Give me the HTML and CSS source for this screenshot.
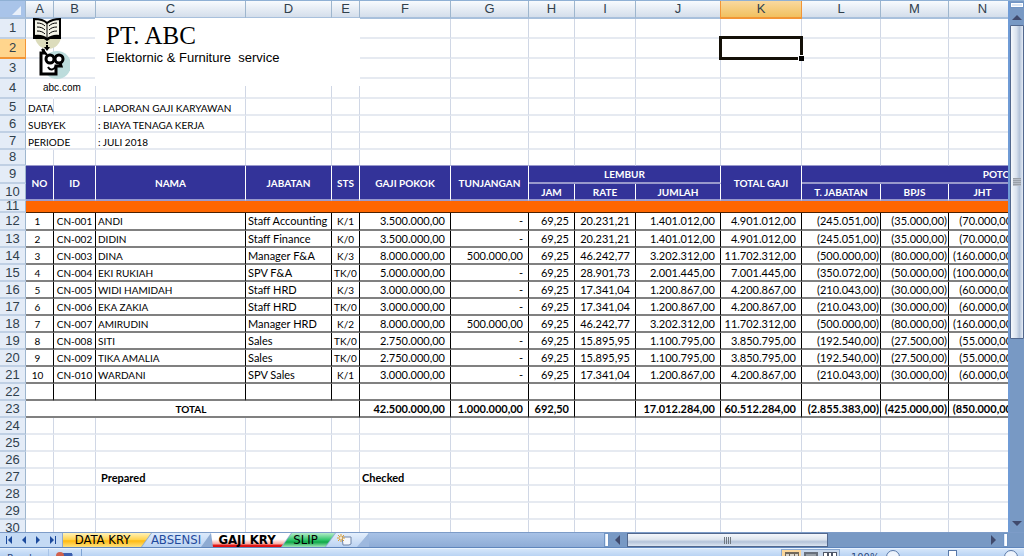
FILE: index.html
```html
<!DOCTYPE html>
<html lang="id">
<head>
<meta charset="utf-8">
<title>Laporan Gaji Karyawan</title>
<link rel="stylesheet" href="styles.css">
</head>
<body>
<main class="workspace">
  <div class="pane">
    <table class="sheet">
      <colgroup>
        <col class="c-head"><col class="c-a"><col class="c-b"><col class="c-c"><col class="c-d"><col class="c-e"><col class="c-f"><col class="c-g"><col class="c-h"><col class="c-i"><col class="c-j"><col class="c-k"><col class="c-l"><col class="c-m"><col class="c-n"><col class="c-o">
      </colgroup>
      <thead>
        <tr class="letters"><th class="corner"><svg width="25" height="16" viewBox="0 0 25 16"><path d="M21 5v9h-9z" fill="#e9f0fa"/></svg></th><th>A</th><th>B</th><th>C</th><th>D</th><th>E</th><th>F</th><th>G</th><th>H</th><th>I</th><th>J</th><th class="picked">K</th><th>L</th><th>M</th><th>N</th><th></th></tr>
      </thead>
      <tbody>
        <tr class="h20"><th>1</th><td class="open"></td><td></td><td></td><td></td><td></td><td></td><td></td><td></td><td></td><td></td><td></td><td></td><td></td><td></td><td></td></tr>
        <tr class="h20"><th class="picked">2</th><td></td><td></td><td></td><td></td><td></td><td></td><td></td><td></td><td></td><td></td><td class="active-cell"><div class="cursor"><i class="handle"></i></div></td><td></td><td></td><td></td><td></td></tr>
        <tr class="h20"><th>3</th><td class="open"></td><td></td><td></td><td></td><td></td><td></td><td></td><td></td><td></td><td></td><td></td><td></td><td></td><td></td><td></td></tr>
        <tr class="h20"><th>4</th><td class="open"></td><td></td><td></td><td></td><td></td><td></td><td></td><td></td><td></td><td></td><td></td><td></td><td></td><td></td><td></td></tr>
        <tr class="h17 info"><th>5</th><td>DATA</td><td></td><td>: LAPORAN GAJI KARYAWAN</td><td></td><td></td><td></td><td></td><td></td><td></td><td></td><td></td><td></td><td></td><td></td><td></td></tr>
        <tr class="h17 info"><th>6</th><td colspan="2">SUBYEK</td><td>: BIAYA TENAGA KERJA</td><td></td><td></td><td></td><td></td><td></td><td></td><td></td><td></td><td></td><td></td><td></td><td></td></tr>
        <tr class="h17 info"><th>7</th><td colspan="2">PERIODE</td><td>: JULI 2018</td><td></td><td></td><td></td><td></td><td></td><td></td><td></td><td></td><td></td><td></td><td></td><td></td></tr>
        <tr class="h16 before-head"><th>8</th><td></td><td></td><td></td><td></td><td></td><td></td><td></td><td></td><td></td><td></td><td></td><td></td><td></td><td></td><td></td></tr>
        <tr class="h18 titles"><th>9</th><td rowspan="2">NO</td><td rowspan="2">ID</td><td rowspan="2">NAMA</td><td rowspan="2">JABATAN</td><td rowspan="2">STS</td><td rowspan="2">GAJI POKOK</td><td rowspan="2">TUNJANGAN</td><td colspan="3">LEMBUR</td><td rowspan="2">TOTAL GAJI</td><td colspan="4">POTONGAN</td></tr>
        <tr class="h17 titles"><th>10</th><td>JAM</td><td>RATE</td><td>JUMLAH</td><td>T. JABATAN</td><td>BPJS</td><td>JHT</td><td></td></tr>
        <tr class="h12 band"><th>11</th><td colspan="15"></td></tr>
        <tr class="h18 rec"><th>12</th><td>1</td><td>CN-001</td><td>ANDI</td><td>Staff Accounting</td><td>K/1</td><td>3.500.000,00</td><td>-</td><td>69,25</td><td>20.231,21</td><td>1.401.012,00</td><td>4.901.012,00</td><td>(245.051,00)</td><td>(35.000,00)</td><td>(70.000,00)</td><td></td></tr>
        <tr class="h17 rec"><th>13</th><td>2</td><td>CN-002</td><td>DIDIN</td><td>Staff Finance</td><td>K/0</td><td>3.500.000,00</td><td>-</td><td>69,25</td><td>20.231,21</td><td>1.401.012,00</td><td>4.901.012,00</td><td>(245.051,00)</td><td>(35.000,00)</td><td>(70.000,00)</td><td></td></tr>
        <tr class="h17 rec"><th>14</th><td>3</td><td>CN-003</td><td>DINA</td><td>Manager F&amp;A</td><td>K/3</td><td>8.000.000,00</td><td>500.000,00</td><td>69,25</td><td>46.242,77</td><td>3.202.312,00</td><td>11.702.312,00</td><td>(500.000,00)</td><td>(80.000,00)</td><td>(160.000,00)</td><td></td></tr>
        <tr class="h17 rec"><th>15</th><td>4</td><td>CN-004</td><td>EKI RUKIAH</td><td>SPV F&amp;A</td><td>TK/0</td><td>5.000.000,00</td><td>-</td><td>69,25</td><td>28.901,73</td><td>2.001.445,00</td><td>7.001.445,00</td><td>(350.072,00)</td><td>(50.000,00)</td><td>(100.000,00)</td><td></td></tr>
        <tr class="h17 rec"><th>16</th><td>5</td><td>CN-005</td><td>WIDI HAMIDAH</td><td>Staff HRD</td><td>K/3</td><td>3.000.000,00</td><td>-</td><td>69,25</td><td>17.341,04</td><td>1.200.867,00</td><td>4.200.867,00</td><td>(210.043,00)</td><td>(30.000,00)</td><td>(60.000,00)</td><td></td></tr>
        <tr class="h17 rec"><th>17</th><td>6</td><td>CN-006</td><td>EKA ZAKIA</td><td>Staff HRD</td><td>TK/0</td><td>3.000.000,00</td><td>-</td><td>69,25</td><td>17.341,04</td><td>1.200.867,00</td><td>4.200.867,00</td><td>(210.043,00)</td><td>(30.000,00)</td><td>(60.000,00)</td><td></td></tr>
        <tr class="h17 rec"><th>18</th><td>7</td><td>CN-007</td><td>AMIRUDIN</td><td>Manager HRD</td><td>K/2</td><td>8.000.000,00</td><td>500.000,00</td><td>69,25</td><td>46.242,77</td><td>3.202.312,00</td><td>11.702.312,00</td><td>(500.000,00)</td><td>(80.000,00)</td><td>(160.000,00)</td><td></td></tr>
        <tr class="h17 rec"><th>19</th><td>8</td><td>CN-008</td><td>SITI</td><td>Sales</td><td>TK/0</td><td>2.750.000,00</td><td>-</td><td>69,25</td><td>15.895,95</td><td>1.100.795,00</td><td>3.850.795,00</td><td>(192.540,00)</td><td>(27.500,00)</td><td>(55.000,00)</td><td></td></tr>
        <tr class="h17 rec"><th>20</th><td>9</td><td>CN-009</td><td>TIKA AMALIA</td><td>Sales</td><td>TK/0</td><td>2.750.000,00</td><td>-</td><td>69,25</td><td>15.895,95</td><td>1.100.795,00</td><td>3.850.795,00</td><td>(192.540,00)</td><td>(27.500,00)</td><td>(55.000,00)</td><td></td></tr>
        <tr class="h17 rec"><th>21</th><td>10</td><td>CN-010</td><td>WARDANI</td><td>SPV Sales</td><td>K/1</td><td>3.000.000,00</td><td>-</td><td>69,25</td><td>17.341,04</td><td>1.200.867,00</td><td>4.200.867,00</td><td>(210.043,00)</td><td>(30.000,00)</td><td>(60.000,00)</td><td></td></tr>
        <tr class="h17 rec"><th>22</th><td></td><td></td><td></td><td></td><td></td><td></td><td></td><td></td><td></td><td></td><td></td><td></td><td></td><td></td><td></td></tr>
        <tr class="h17 total"><th>23</th><td colspan="5" class="mid">TOTAL</td><td>42.500.000,00</td><td>1.000.000,00</td><td>692,50</td><td></td><td>17.012.284,00</td><td>60.512.284,00</td><td class="neg">(2.855.383,00)</td><td class="neg">(425.000,00)</td><td class="neg">(850.000,00)</td><td></td></tr>
        <tr class="h17"><th>24</th><td></td><td></td><td></td><td></td><td></td><td></td><td></td><td></td><td></td><td></td><td></td><td></td><td></td><td></td><td></td></tr>
        <tr class="h17"><th>25</th><td></td><td></td><td></td><td></td><td></td><td></td><td></td><td></td><td></td><td></td><td></td><td></td><td></td><td></td><td></td></tr>
        <tr class="h17"><th>26</th><td></td><td></td><td></td><td></td><td></td><td></td><td></td><td></td><td></td><td></td><td></td><td></td><td></td><td></td><td></td></tr>
        <tr class="h17 sign"><th>27</th><td></td><td></td><td class="indent">Prepared</td><td></td><td></td><td>Checked</td><td></td><td></td><td></td><td></td><td></td><td></td><td></td><td></td><td></td></tr>
        <tr class="h17"><th>28</th><td></td><td></td><td></td><td></td><td></td><td></td><td></td><td></td><td></td><td></td><td></td><td></td><td></td><td></td><td></td></tr>
        <tr class="h17"><th>29</th><td></td><td></td><td></td><td></td><td></td><td></td><td></td><td></td><td></td><td></td><td></td><td></td><td></td><td></td><td></td></tr>
        <tr class="h17"><th>30</th><td></td><td></td><td></td><td></td><td></td><td></td><td></td><td></td><td></td><td></td><td></td><td></td><td></td><td></td><td></td></tr>
      </tbody>
    </table>
    <div class="letterhead">
      <div class="brand">
        <svg width="40" height="62" viewBox="0 0 40 62">
          <circle cx="18" cy="18" r="13" fill="#dcdcbc"/>
          <circle cx="27" cy="47" r="14" fill="#bcdcdc"/>
          <path d="M4 1v17c6-1 10 0 13 3 4-3 8-4 13-3V1c-5 0-9 1-13 4C14 2 9 1 4 1z" fill="#f4f4e8" stroke="#000" stroke-width="2"/>
          <path d="M3 18c6-1 11 0 14 3 4-3 8-4 14-3v3H20l-3 2-3-2H3z" fill="#000"/>
          <path d="M17 5v15" stroke="#000"/>
          <path d="M7 5c4 0 6 1 8 3M7 9c4 0 6 1 8 3M7 13c4 0 6 1 8 3M27 5c-4 0-6 1-8 3M27 9c-4 0-6 1-8 3M27 13c-4 0-6 1-8 3" fill="none" stroke="#000" stroke-width="1"/>
          <path d="M17 24v5" stroke="#000" stroke-width="2" stroke-dasharray="2 1"/><path d="M14 29h6l-3 4z"/>
          <path d="M14 31l-3 5v21h15v-8h4l-2-6V37H18z" fill="#fff"/>
          <path d="M13 31l1 4h-3v21h15v-8h5l-2-6" fill="none" stroke="#000" stroke-width="3"/>
          <circle cx="20" cy="41" r="4" fill="#fff" stroke="#000" stroke-width="3"/><circle cx="29" cy="41" r="4" fill="#fff" stroke="#000" stroke-width="3"/>
          <path d="M18 49c2 4 6 3 8-1M12 31l5 6" fill="none" stroke="#000" stroke-width="2"/>
        </svg>
        <span class="site">abc.com</span>
      </div>
      <div class="company">
        <h1>PT. ABC</h1>
        <p>Elektornic &amp; Furniture&nbsp; service</p>
      </div>
    </div>
  </div>
  <div class="vscroll">
    <span class="split"></span>
    <button class="arrow" aria-label="Scroll up"><svg width="10" height="6" viewBox="0 0 10 6"><path d="M0 6l5-5 5 5z" fill="#404a6c"/></svg></button>
    <div class="vtrack"><span class="vthumb"><i></i></span></div>
    <button class="arrow" aria-label="Scroll down"><svg width="10" height="6" viewBox="0 0 10 6"><path d="M0 0l5 5 5-5z" fill="#404a6c"/></svg></button>
  </div>
</main>
<div class="tabbar">
  <div class="nav">
    <button aria-label="First sheet"><svg width="8" height="8" viewBox="0 0 8 8"><path d="M1 0h1v8H1zM7 0v8L3 4z" fill="#1c4a9c"/></svg></button>
    <button aria-label="Previous sheet"><svg width="8" height="8" viewBox="0 0 8 8"><path d="M6 0v8L2 4z" fill="#1c4a9c"/></svg></button>
    <button aria-label="Next sheet"><svg width="8" height="8" viewBox="0 0 8 8"><path d="M2 0v8l4-4z" fill="#1c4a9c"/></svg></button>
    <button aria-label="Last sheet"><svg width="8" height="8" viewBox="0 0 8 8"><path d="M6 0h1v8H6zM1 0v8l4-4z" fill="#1c4a9c"/></svg></button>
  </div>
  <div class="tabs">
    <button class="tab first yellow">DATA KRY</button>
    <button class="tab blue">ABSENSI</button>
    <button class="tab current">GAJI KRY</button>
    <button class="tab green">SLIP</button>
    <button class="tab add" aria-label="Insert sheet"><svg width="16" height="12" viewBox="0 0 16 12"><path d="M5 3h9v7l-2 1H6z" fill="#f4f7fc" stroke="#6f84a8"/><path d="M4 0v8M0 4h8M1 1l6 6M7 1L1 7" stroke="#e0a030"/><circle cx="4" cy="4" r="1" fill="#fff"/></svg></button>
  </div>
  <div class="filler"></div>
  <div class="hscroll">
    <span class="grip"></span>
    <button class="side" aria-label="Scroll left"><svg width="6" height="10" viewBox="0 0 6 10"><path d="M5 0v10L0 5z" fill="#404a6c"/></svg></button>
    <div class="htrack"><span class="hthumb"><i></i><i></i><i></i><i></i></span></div>
    <button class="side" aria-label="Scroll right"><svg width="6" height="10" viewBox="0 0 6 10"><path d="M0 0v10l5-5z" fill="#404a6c"/></svg></button>
    <span class="grip"></span>
  </div>
</div>
<footer class="status">
  <span class="ready">Ready</span>
  <span class="macro"><svg width="20" height="12" viewBox="0 0 20 12"><path d="M4 2h13v10H4z" fill="#fff" stroke="#3c5fae"/><path d="M4 1h13v3H4z" fill="#3c5fae"/><circle cx="5" cy="4" r="4" fill="#d0604c"/></svg></span>
  <div class="views">
    <button class="on" aria-label="Normal view"><svg width="14" height="10" viewBox="0 0 14 10"><path d="M0 0h14v10H0z" fill="#70685c"/><path d="M1 2h3v3H1zM5 2h4v3H5zM10 2h3v3h-3z" fill="#d8d4cc"/></svg></button>
    <button aria-label="Page layout view"><svg width="14" height="10" viewBox="0 0 14 10"><path d="M0 0h14v10H0z" fill="#68707c"/><path d="M2 2h10v8H2z" fill="#98a0a8"/></svg></button>
    <button aria-label="Page break view"><svg width="14" height="10" viewBox="0 0 14 10"><path d="M0 0h14v10H0z" fill="#505868"/><path d="M1 1h3v4H1zM6 1h2v4H6zM10 1h3v4h-3z" fill="#fff"/></svg></button>
  </div>
  <span class="percent">100%</span>
  <div class="zoombar"><span class="round"></span><span class="knob"></span><span class="round"></span></div>
</footer>
</body>
</html>
```

FILE: styles.css
```css
* { box-sizing: border-box; }
body {
  margin: 0;
  height: 100vh;
  display: flex;
  flex-direction: column;
  overflow: hidden;
  background: #fff;
  color: #000;
  font-family: Lato, "Open Sans", sans-serif;
  font-size: 10px;
}
button { border: 0; padding: 0; margin: 0; background: none; font: inherit; color: inherit; }
svg { display: block; }

.workspace { flex: 1; min-height: 0; display: flex; border-top: 1px solid #8fb0d4; }
.pane { flex: 1; min-width: 0; overflow: hidden; position: relative; }

/* Grid */
.sheet { table-layout: fixed; width: 1222px; border-collapse: separate; border-spacing: 0; }
.c-head { width: 26px; } .c-a { width: 28px; } .c-b { width: 42px; } .c-c { width: 150px; }
.c-d { width: 86px; } .c-e { width: 28px; } .c-f { width: 91px; } .c-g { width: 78px; }
.c-h { width: 46px; } .c-i { width: 61px; } .c-j { width: 85px; } .c-k { width: 81px; }
.c-l { width: 79px; } .c-m { width: 68px; } .c-n { width: 68px; } .c-o { width: 205px; }
.h12 { height: 12px; } .h16 { height: 16px; } .h17 { height: 17px; } .h18 { height: 18px; } .h20 { height: 20px; }
.sheet th, .sheet td { padding: 0; line-height: 12px; white-space: nowrap; }
.sheet td { border-right: 1px solid #d0d7e5; border-bottom: 2px solid #e6eaf1; }
.sheet th {
  background: #e4ecf7;
  border-right: 1px solid #9eb6ce;
  border-bottom: 2px solid #c0d0e4;
  color: #30404c;
  font: 13px/10px "Liberation Sans", Arial, sans-serif;
  text-align: center;
}
.letters { height: 18px; }
.sheet .letters th {
  background: linear-gradient(#f8fbfe, #d4deeb);
  border-bottom: 2px solid #a8c0dc;
}
.sheet .letters .corner { background: #a9c4e9; }
.sheet .letters .picked { background: linear-gradient(#f9d99f, #f1c15f); border-right-color: #f29536; border-bottom-color: #f29536; box-shadow: -1px 0 #f29536; }
.sheet th.picked { background: #ffd58d; border-color: #f29536; }
.sheet td.open { border-right-color: transparent; }

.sheet .info td { padding-left: 2px; vertical-align: bottom; }
.sheet .before-head td { border-bottom: 1px solid #9999cc; }
.sheet .titles td {
  background: #333399;
  color: #fff;
  border-right: 1px solid #fff;
  border-bottom: 2px solid #9999cc;
  font-weight: 700;
  text-align: center;
}
.sheet .band th { line-height: 8px; }
.sheet .band td { background: #ff6600; border-bottom: 1px solid #4c2000; }
.sheet .rec td, .sheet .total td {
  border-right: 1px solid #000;
  border-bottom: 2px solid #808080;
  padding-left: 2px;
  padding-right: 5px;
  text-align: right;
  vertical-align: middle;
  font-size: 11px;
}
.sheet .rec td:nth-child(2), .sheet .rec td:nth-child(3), .sheet .rec td:nth-child(6) { text-align: center; padding: 0; font-size: 10px; }
.sheet .rec td:nth-child(2) { padding-right: 4px; }
.sheet .rec td:nth-child(4), .sheet .rec td:nth-child(5) { text-align: left; padding-right: 0; }
.sheet .rec td:nth-child(4) { font-size: 10px; }
.sheet .rec td:nth-child(n+13), .sheet .total .neg { padding-right: 1px; }
.sheet .total td { font-weight: 700; }
.sheet .total .mid { text-align: center; font-size: 10px; }
.sheet .sign td { padding-left: 2px; font-weight: 700; vertical-align: bottom; font-size: 11px; }
.sheet .sign .indent { padding-left: 5px; }

.active-cell { position: relative; }
.cursor { position: absolute; top: -3px; right: -2px; bottom: -3px; left: -2px; border: 3px solid #141008; }
.handle { position: absolute; right: -4px; bottom: -4px; width: 6px; height: 6px; background: #000; border: 1px solid #fff; border-width: 1px 0 0 1px; }

/* Letterhead picture floating over the first rows */
.letterhead { position: absolute; top: 17px; left: 26px; display: flex; }
.brand { width: 69px; display: flex; flex-direction: column; padding-left: 4px; }
.site { padding-left: 13px; font: 10px/16px "Liberation Sans", Arial, sans-serif; }
.company { width: 265px; height: 68px; padding: 4px 0 0 11px; background: #fff; }
.company h1 { margin: 0; font: 25px/28px "Liberation Serif", "Times New Roman", serif; color: #000; }
.company p { margin: 0; font: 13px/16px "Liberation Sans", Arial, sans-serif; }

/* Vertical scrollbar */
.vscroll { width: 16px; display: flex; flex-direction: column; align-items: stretch; background: #7899c4; border-left: 2px solid #6f9bd6; }
.split { height: 6px; margin: 1px 0; background: #dce8f6; border: 1px solid #6f94c4; outline: 1px solid #fff; outline-offset: -2px; }
.arrow { height: 16px; display: flex; align-items: center; justify-content: center; }
.vtrack { flex: 1; }
.vthumb { display: flex; align-items: center; justify-content: center; height: 64%; border: 1px solid #52688e; border-radius: 1px; background: linear-gradient(90deg, #f5f8fc, #d9e2ee 45%, #b4c3d9 70%, #e4ebf5); }
.vthumb i { width: 8px; height: 8px; background: repeating-linear-gradient(#9aa0a8 0 1px, #b8bec8 1px 2px); }

/* Sheet tabs and horizontal scrollbar */
.tabbar { height: 16px; display: flex; background: #9db8de; border-top: 1px solid #7d9cc8; border-bottom: 1px solid #5f86bc; }
.nav { width: 62px; display: flex; align-items: center; justify-content: space-between; padding: 0 5px; background: #c4daf4; }
.tabs { display: flex; background: #8eabd2; clip-path: polygon(0 0, 100% 0, calc(100% - 12px) 100%, 0 100%); }
.tab {
  padding: 0;
  margin-left: -10px;
  font: 13px/14px "DejaVu Sans Condensed", "DejaVu Sans", sans-serif;
  clip-path: polygon(11px 0, 100% 0, calc(100% - 10px) 100%, 1px 100%);
}
.tab.first { width: 89px; margin-left: 0; padding: 0 8px 0 0; clip-path: polygon(1px 0, 100% 0, calc(100% - 10px) 100%, 1px 100%); }
.yellow { background: linear-gradient(#fff2b8, #ffd24a 50%, #ffb90f 55%, #ffe27c); }
.blue { width: 70px; background: linear-gradient(#dceafb, #b9d2f1); color: #1f4a9c; }
.current { width: 80px; margin-left: 0; padding-right: 8px; background: linear-gradient(#fff 45%, #f9b0a8 75%, #e01010 90%); color: #000; font-weight: 700; clip-path: polygon(0 0, 100% 0, calc(100% - 10px) 100%, 2px 100%); }
.green { width: 54px; padding-right: 5px; background: linear-gradient(#b4ecc8, #2ec468 50%, #10a848 65%, #a0e4b8); color: #000; }
.add { width: 44px; padding-left: 12px; background: linear-gradient(#e4effc, #bcd3f2); }
.filler { flex: 1; background: linear-gradient(#a8c2e6, #8eacd6); }
.hscroll { flex: 0 0 41%; display: flex; align-items: stretch; background: #7899c4; }
.grip { width: 5px; background: #fff; border: 1px solid #6f94c4; box-shadow: inset 1px 0 #dce8f6; }
.side { width: 18px; display: flex; align-items: center; justify-content: center; }
.htrack { flex: 1; }
.hthumb { display: flex; align-items: center; justify-content: center; gap: 1px; width: 56%; height: 14px; border: 1px solid #52688e; background: linear-gradient(#f4f7fb, #dfe6ef 45%, #b4c3d9 65%, #dde6f2); }
.hthumb i { width: 1px; height: 7px; background: #707880; }
.hscroll .grip:last-child { margin-right: 16px; }

/* Status bar, cut off by the window edge */
.status { height: 8px; display: flex; align-items: flex-start; overflow: hidden; border-top: 1px solid #e8f2fe; background: linear-gradient(#d5e6fa, #b9d3f3); font: 11px/12px "DejaVu Sans Condensed", "DejaVu Sans", sans-serif; color: #2c4a80; }
.ready { width: 48px; padding: 4px 0 0 7px; }
.macro { width: 34px; padding: 3px 0 0 6px; height: 8px; border-left: 1px solid #a8c4e8; border-right: 1px solid #7fa4d4; }
.views { margin-left: auto; display: flex; border: 1px solid #8aa8d0; }
.views button { padding: 2px 2px 0 3px; background: #c8d8ec; }
.views .on { background: #fbd79c; }
.percent { width: 46px; padding: 3px 0 0 11px; }
.zoombar { width: 138px; display: flex; justify-content: space-between; padding: 1px 6px 0 0; }
.round { width: 14px; height: 14px; border: 1px solid #5878a8; border-radius: 50%; background: #eef4fc; }
.knob { width: 9px; height: 12px; border: 1px solid #5878a8; background: #fff; }
```
